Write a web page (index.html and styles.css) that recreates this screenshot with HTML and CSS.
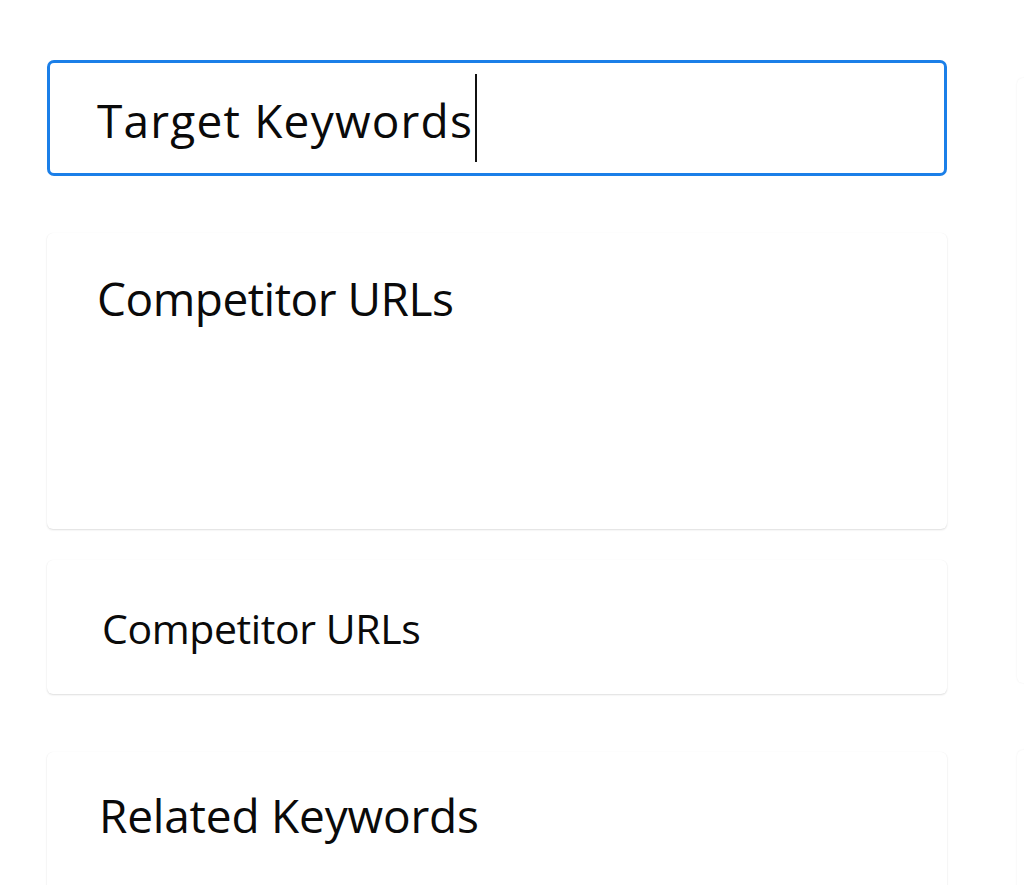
FILE: index.html
```html
<!DOCTYPE html>
<html lang="en">
<head>
<meta charset="utf-8">
<link rel="stylesheet" href="styles.css">
</head>
<body>
<div class="page">
  <div class="main">
    <div class="input-box">
      <span class="input-text">Target Keywords</span><span class="caret"></span>
    </div>
    <div class="card card-tall">
      <div class="card-title">Competitor URLs</div>
    </div>
    <div class="card card-short">
      <div class="card-title small">Competitor URLs</div>
    </div>
    <div class="card card-last">
      <div class="card-title related">Related Keywords</div>
    </div>
  </div>
  <div class="side">
    <div class="side-card side-top"></div>
    <div class="side-card side-bottom"></div>
  </div>
</div>
</body>
</html>
```
FILE: styles.css
```css
html, body {
  margin: 0;
  padding: 0;
  background: #ffffff;
  height: 885px;
  overflow: hidden;
}
body {
  font-family: "Open Sans", "Noto Sans", sans-serif;
  font-weight: 470;
  color: #0a0a0a;
}
.page {
  display: flex;
  gap: 70px;
  padding: 60px 0 0 47px;
}
.main {
  width: 900px;
  flex: none;
  display: flex;
  flex-direction: column;
}
.input-box {
  height: 116px;
  box-sizing: border-box;
  border: 3px solid #1b7fe8;
  border-radius: 7px;
  display: flex;
  align-items: center;
  padding-left: 47px;
}
.input-text {
  font-size: 46px;
  letter-spacing: 1.2px;
  line-height: 1;
  padding-top: 4px;
}
.caret {
  width: 2px;
  height: 88px;
  background: #111;
  margin-left: 2px;
}
.card {
  background: #fff;
  border-radius: 6px;
  box-shadow: 0 1px 2px rgba(0,0,0,0.13), 0 0 1px rgba(0,0,0,0.05);
  box-sizing: border-box;
  padding-left: 50px;
}
.card-title {
  font-size: 46px;
  letter-spacing: -0.5px;
  line-height: 1;
}
.card-title.small {
  font-size: 41px;
  letter-spacing: -0.4px;
}
.card-title.related {
  letter-spacing: -0.2px;
}
.card-tall {
  margin-top: 57px;
  height: 296px;
  padding-top: 42px;
}
.card-short {
  margin-top: 31px;
  height: 134px;
  padding-top: 48px;
  padding-left: 55px;
}
.card-last {
  margin-top: 58px;
  height: 160px;
  padding-top: 40px;
  padding-left: 52px;
}
.side {
  flex: none;
  width: 300px;
  display: flex;
  flex-direction: column;
}
.side-card {
  background: #fff;
  border-radius: 6px;
  box-shadow: 0 0 2px rgba(0,0,0,0.08);
}
.side-top {
  margin-top: 18px;
  height: 605px;
}
.side-bottom {
  margin-top: 67px;
  height: 200px;
}
```
